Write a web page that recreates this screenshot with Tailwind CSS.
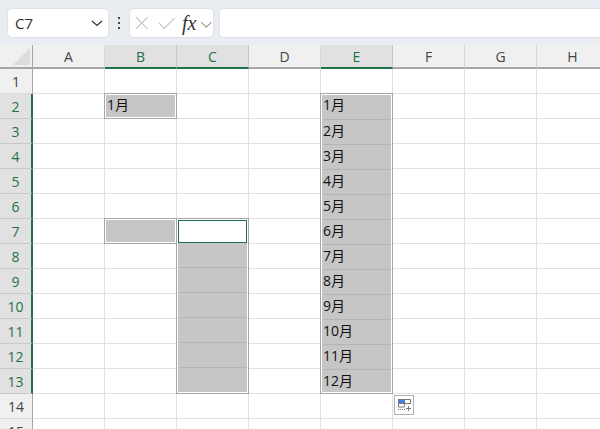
<!DOCTYPE html>
<html lang="ja">

<head>
    <meta charset="UTF-8">
    <script src="https://cdn.jsdelivr.net/npm/@tailwindcss/browser@4"></script>
    <title>Excel</title>
</head>

<body class="w-[600px] h-[429px] overflow-hidden bg-white font-['Open_Sans','Noto_Sans_CJK_JP',sans-serif] text-[#444]">
    <div class="h-[45px] bg-[#e9edf2] flex items-center pl-[7px] pt-[1px]">
        <div class="w-[102px] h-[30px] bg-white border border-[#dfe3e8] rounded-[5px] flex items-center justify-between pl-[7px] pr-[3px] text-[15px] text-[#333]">
            C7
            <svg width="16" height="16" viewBox="0 0 16 16" fill="none" stroke="#333" stroke-width="1.3"><path d="M3 6l5 4.5L13 6" /></svg>
        </div>
        <svg class="ml-[7px]" width="6" height="14" viewBox="0 0 6 14" fill="#444"><rect x="2" y="1" width="2" height="2" /><rect x="2" y="6" width="2" height="2" /><rect x="2" y="11" width="2" height="2" /></svg>
        <div class="ml-[7px] w-[85px] h-[30px] bg-white border border-[#dfe3e8] rounded-[5px] flex items-center pl-[5px]">
            <svg width="14" height="14" viewBox="0 0 14 14" fill="none" stroke="#c4c4c4" stroke-width="1.2"><path d="M1 1l12 12M13 1L1 13" /></svg>
            <svg class="ml-[9px]" width="18" height="14" viewBox="0 0 18 14" fill="none" stroke="#c4c4c4" stroke-width="1.2"><path d="M1 7l5.500 5.500L17 2" /></svg>
            <span class="ml-[7px] font-['Liberation_Serif'] italic text-[20px] leading-none text-[#333]">fx</span>
            <svg class="ml-[4px] mt-[2px]" width="13" height="11" viewBox="0 0 13 11" fill="none" stroke="#999" stroke-width="1.1"><path d="M1 3l5.500 5L12 3" /></svg>
        </div>
        <div class="ml-[5px] flex-1 h-[30px] bg-white border border-[#dfe3e8] rounded-l-[5px] border-r-0"></div>
    </div>

    <div class="relative">
        <div id="sheet" class="grid grid-cols-[33px_repeat(8,72px)] grid-rows-[24px_repeat(15,25px)]"></div>

        <!-- selected ranges -->
        <div class="absolute left-[104px] top-[48px] w-[73px] h-[26px] border border-[#a6a6a6]">
            <div class="h-full border border-white bg-[#c6c6c6] text-[14px] text-[#111] pl-[1px] leading-[20px]">1月</div>
        </div>
        <div class="absolute left-[104px] top-[173px] w-[73px] h-[26px] border border-[#a6a6a6]">
            <div class="h-full border border-white bg-[#c6c6c6]"></div>
        </div>
        <div class="absolute left-[176px] top-[173px] w-[73px] h-[176px] border border-[#a6a6a6]">
            <div class="h-full border border-white bg-[#c6c6c6] flex flex-col">
                <div class="h-[23px] bg-white border-[1.5px] border-[#1f7246] shrink-0"></div>
                <div class="h-[24px] shrink-0"></div>
                <div class="h-[25px] shrink-0 border-t border-[#b4b4b4]"></div>
                <div class="h-[25px] shrink-0 border-t border-[#b4b4b4]"></div>
                <div class="h-[25px] shrink-0 border-t border-[#b4b4b4]"></div>
                <div class="h-[25px] shrink-0 border-t border-[#b4b4b4]"></div>
                <div class="h-[24px] shrink-0 border-t border-[#b4b4b4]"></div>
            </div>
        </div>
        <div class="absolute left-[320px] top-[48px] w-[73px] h-[301px] border border-[#a6a6a6]">
            <div class="h-full border border-white bg-[#c6c6c6] text-[14px] text-[#111] pl-[1px] flex flex-col">
                <div class="h-[24px] shrink-0 leading-[20px]">1月</div>
                <div class="h-[25px] shrink-0 border-t border-[#b4b4b4] leading-[21px]">2月</div>
                <div class="h-[25px] shrink-0 border-t border-[#b4b4b4] leading-[21px]">3月</div>
                <div class="h-[25px] shrink-0 border-t border-[#b4b4b4] leading-[21px]">4月</div>
                <div class="h-[25px] shrink-0 border-t border-[#b4b4b4] leading-[21px]">5月</div>
                <div class="h-[25px] shrink-0 border-t border-[#b4b4b4] leading-[21px]">6月</div>
                <div class="h-[25px] shrink-0 border-t border-[#b4b4b4] leading-[21px]">7月</div>
                <div class="h-[25px] shrink-0 border-t border-[#b4b4b4] leading-[21px]">8月</div>
                <div class="h-[25px] shrink-0 border-t border-[#b4b4b4] leading-[21px]">9月</div>
                <div class="h-[25px] shrink-0 border-t border-[#b4b4b4] leading-[21px]">10月</div>
                <div class="h-[25px] shrink-0 border-t border-[#b4b4b4] leading-[21px]">11月</div>
                <div class="h-[24px] shrink-0 border-t border-[#b4b4b4] leading-[21px]">12月</div>
            </div>
        </div>

        <!-- quick analysis button -->
        <div class="absolute left-[394px] top-[350px] w-[20px] h-[20px] bg-white border border-[#b0b0b0] flex items-center justify-center">
            <svg width="16" height="16" viewBox="0 0 16 16" fill="none"><rect x="2" y="2" width="6" height="4" fill="#3b82e6" /><path d="M2.500 2.500h12v4h-12zM8.500 2.500v7M2.500 6.500v3.500h6" stroke="#777" /><path d="M2 12.500h7" stroke="#777" stroke-dasharray="1 1" /><path d="M10 11.500h5M12.500 9v5" stroke="#777" /></svg>
        </div>
    </div>

    <script>
        const sheet = document.getElementById('sheet');
        const colSelected = ['B', 'C', 'E'];
        const headerBase = 'flex items-center justify-center text-[14px] ';

        const addCell = (className, text) => {
            const cell = document.createElement('div');
            cell.className = className;
            cell.textContent = text || '';
            sheet.appendChild(cell);
        };

        addCell('relative bg-[#f0f0f0] border-r border-b-2 border-[#a6a6a6]', '');
        sheet.lastChild.innerHTML = '<svg class="absolute left-[13px] top-[3px]" width="17" height="17" viewBox="0 0 17 17"><path d="M17 0v17H0z" fill="#dcdcdc" /></svg>';

        ['A', 'B', 'C', 'D', 'E', 'F', 'G', 'H'].forEach(col => {
            if (colSelected.includes(col)) {
                addCell(headerBase + 'bg-[#e1e1e1] text-[#1f7246] border-b-2 border-b-[#1f7246] border-r border-r-[#c8c8c8]', col);
            } else {
                addCell(headerBase + 'bg-[#f0f0f0] border-b-2 border-b-[#a6a6a6] border-r border-r-[#d8d8d8]', col);
            }
        });

        for (let row = 1; row <= 15; row++) {
            if (row >= 2 && row <= 13) {
                addCell(headerBase + 'bg-[#e1e1e1] text-[#1f7246] border-b border-b-[#c8c8c8] border-r-2 border-r-[#1f7246]', row);
            } else {
                addCell(headerBase + 'bg-[#f0f0f0] border-b border-b-[#d8d8d8] border-r border-r-[#a6a6a6]', row);
            }
            for (let c = 0; c < 8; c++) {
                addCell('border-r border-b border-[#e1e1e1]', '');
            }
        }
    </script>
</body>

</html>
